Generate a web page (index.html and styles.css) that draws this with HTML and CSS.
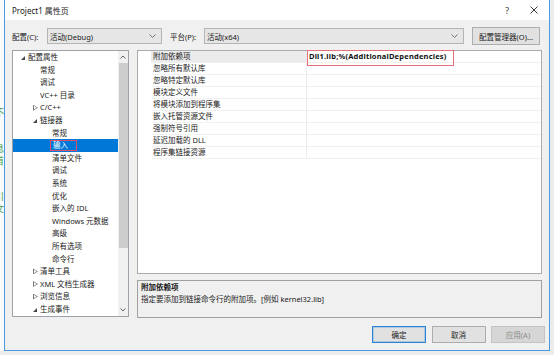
FILE: index.html
```html
<!DOCTYPE html>
<html lang="zh-CN">
<head>
    <meta charset="UTF-8">
    <title>Project1 属性页</title>
    <link rel="stylesheet" href="styles.css">
</head>
<body>

<div class="screen">
    <div class="behind">
        <div class="ghost">不</div>
        <div class="ghost"></div>
        <div class="ghost"></div>
        <div class="ghost">息</div>
        <div class="ghost">首</div>
        <div class="ghost"></div>
        <div class="ghost"></div>
        <div class="ghost">引</div>
        <div class="ghost">文</div>
    </div>

    <div class="dialog">
        <div class="titlebar">
            <span class="title">Project1 属性页</span>
            <span class="help">?</span>
            <svg class="close" width="8" height="8" viewBox="0 0 8 8">
                <path d="M0.5 0.5 L7.5 7.5 M7.5 0.5 L0.5 7.5" stroke="#222" stroke-width="0.9" fill="none"/>
            </svg>
        </div>

        <div class="config-row">
            <span class="label label-config">配置(C):</span>
            <div class="combo combo-config">
                <span>活动(Debug)</span>
                <svg class="chevron" width="7" height="4" viewBox="0 0 7 4"><polyline points="0.5,0.5 3.5,3.5 6.5,0.5" fill="none" stroke="#555" stroke-width="0.8"/></svg>
            </div>
            <span class="label label-platform">平台(P):</span>
            <div class="combo combo-platform">
                <span>活动(x64)</span>
                <svg class="chevron" width="7" height="4" viewBox="0 0 7 4"><polyline points="0.5,0.5 3.5,3.5 6.5,0.5" fill="none" stroke="#555" stroke-width="0.8"/></svg>
            </div>
            <button class="btn btn-manager">配置管理器(O)...</button>
        </div>

        <div class="main">
            <div class="tree">
                <ul class="tree-list">
                    <li class="node lv0"><span class="tog open"></span>配置属性</li>
                    <li class="node lv1"><span class="tog"></span>常规</li>
                    <li class="node lv1"><span class="tog"></span>调试</li>
                    <li class="node lv1"><span class="tog"></span>VC++ 目录</li>
                    <li class="node lv1"><span class="tog shut"></span>C/C++</li>
                    <li class="node lv1"><span class="tog open"></span>链接器</li>
                    <li class="node lv2"><span class="tog"></span>常规</li>
                    <li class="node lv2 selected"><span class="tog"></span><span class="mark">输入</span></li>
                    <li class="node lv2"><span class="tog"></span>清单文件</li>
                    <li class="node lv2"><span class="tog"></span>调试</li>
                    <li class="node lv2"><span class="tog"></span>系统</li>
                    <li class="node lv2"><span class="tog"></span>优化</li>
                    <li class="node lv2"><span class="tog"></span>嵌入的 IDL</li>
                    <li class="node lv2"><span class="tog"></span>Windows 元数据</li>
                    <li class="node lv2"><span class="tog"></span>高级</li>
                    <li class="node lv2"><span class="tog"></span>所有选项</li>
                    <li class="node lv2"><span class="tog"></span>命令行</li>
                    <li class="node lv1"><span class="tog shut"></span>清单工具</li>
                    <li class="node lv1"><span class="tog shut"></span>XML 文档生成器</li>
                    <li class="node lv1"><span class="tog shut"></span>浏览信息</li>
                    <li class="node lv1"><span class="tog open"></span>生成事件</li>
                </ul>
                <div class="scrollbar">
                    <svg class="arrow" width="6" height="4" viewBox="0 0 6 4"><polyline points="0.5,3.5 3,1 5.5,3.5" fill="none" stroke="#555" stroke-width="0.9"/></svg>
                    <div class="thumb"></div>
                    <div class="track"></div>
                    <svg class="arrow" width="6" height="4" viewBox="0 0 6 4"><polyline points="0.5,0.5 3,3 5.5,0.5" fill="none" stroke="#555" stroke-width="0.9"/></svg>
                </div>
            </div>

            <div class="right">
                <div class="grid">
                    <div class="prop active">
                        <span class="gutter"></span>
                        <span class="name">附加依赖项</span>
                        <span class="value"><b>Dll1.lib;%(AdditionalDependencies)</b><span class="redbox"></span></span>
                    </div>
                    <div class="prop"><span class="gutter"></span><span class="name">忽略所有默认库</span><span class="value"></span></div>
                    <div class="prop"><span class="gutter"></span><span class="name">忽略特定默认库</span><span class="value"></span></div>
                    <div class="prop"><span class="gutter"></span><span class="name">模块定义文件</span><span class="value"></span></div>
                    <div class="prop"><span class="gutter"></span><span class="name">将模块添加到程序集</span><span class="value"></span></div>
                    <div class="prop"><span class="gutter"></span><span class="name">嵌入托管资源文件</span><span class="value"></span></div>
                    <div class="prop"><span class="gutter"></span><span class="name">强制符号引用</span><span class="value"></span></div>
                    <div class="prop"><span class="gutter"></span><span class="name">延迟加载的 DLL</span><span class="value"></span></div>
                    <div class="prop"><span class="gutter"></span><span class="name">程序集链接资源</span><span class="value"></span></div>
                </div>
                <div class="desc">
                    <div class="desc-title">附加依赖项</div>
                    <div class="desc-text">指定要添加到链接命令行的附加项。[例如 kernel32.lib]</div>
                </div>
            </div>
        </div>

        <div class="footer">
            <button class="btn btn-ok">确定</button>
            <button class="btn">取消</button>
            <button class="btn btn-disabled">应用(A)</button>
        </div>
    </div>
</div>

</body>
</html>
```

FILE: styles.css
```css
* {
    margin: 0;
    padding: 0;
    box-sizing: border-box;
}
body {
    font-family: 'Noto Sans', 'Noto Sans CJK SC', sans-serif;
    font-size: 7.5px;
    color: #1a1a1a;
    background-color: #e6e6e6;
    width: 554px;
    height: 355px;
    overflow: hidden;
}
.screen {
    display: flex;
    height: 355px;
    background-color: #ececec;
}

/* window peeking out behind the dialog */
.behind {
    width: 4px;
    height: 351px;
    overflow: hidden;
    background-color: #fbfbfb;
    padding-top: 107px;
}
.ghost {
    height: 12px;
    line-height: 12px;
    font-size: 9px;
    color: #3a9a3a;
    margin-left: -5px;
    white-space: nowrap;
}

.dialog {
    width: 546px;
    height: 351px;
    background-color: #f0f0f0;
    border: 1px solid #4c9be2;
    border-top: none;
    display: flex;
    flex-direction: column;
}
.titlebar {
    height: 20px;
    background-color: #fff;
    display: flex;
    align-items: center;
    padding-left: 7px;
}
.title {
    font-size: 8px;
    flex: 1;
}
.help {
    font-size: 8.5px;
    color: #333;
    margin-right: 21px;
}
.close {
    margin-right: 11px;
}

.config-row {
    display: flex;
    align-items: center;
    height: 18px;
    margin-top: 7px;
    padding-left: 7px;
}
.label {
    white-space: nowrap;
}
.label-config {
    width: 35px;
}
.label-platform {
    width: 34px;
    margin-left: 8px;
}
.combo {
    height: 16px;
    background-color: #e6e6e6;
    border: 1px solid #b4b4b4;
    display: flex;
    align-items: center;
    justify-content: space-between;
    padding: 0 5px 0 2px;
}
.combo-config {
    width: 115px;
}
.combo-platform {
    width: 260px;
}
.btn {
    font-family: inherit;
    font-size: 7.5px;
    color: #1a1a1a;
    background-color: #e1e1e1;
    border: 1px solid #adadad;
    height: 17px;
    width: 54px;
}
.btn-manager {
    width: 68px;
    height: 18px;
    margin-left: 8px;
}

.main {
    display: flex;
    gap: 8px;
    margin-top: 5px;
    padding-left: 7px;
    height: 268px;
}
.tree {
    width: 117px;
    height: 267px;
    background-color: #fff;
    border: 1px solid #9ea2a8;
    display: flex;
}
.tree-list {
    list-style: none;
    flex: 1;
}
.node {
    height: 12.6px;
    line-height: 12.6px;
    display: flex;
    align-items: center;
    white-space: nowrap;
}
.lv0 {
    padding-left: 8px;
}
.lv1 {
    padding-left: 20px;
}
.lv2 {
    padding-left: 32px;
}
.tog {
    width: 7px;
    height: 6px;
    flex-shrink: 0;
}
.tog.open {
    border-style: solid;
    border-width: 0 0 4px 4px;
    border-color: transparent transparent #444 transparent;
    width: 0;
    height: 0;
    margin: 1px 3px 0 0;
}
.tog.shut {
    width: 7px;
    position: relative;
    clip-path: polygon(0 0, 5px 3px, 0 6px);
    background-color: #7a7a7a;
}
.tog.shut::after {
    content: '';
    position: absolute;
    left: 1px;
    top: 1.2px;
    width: 6px;
    height: 3.6px;
    background-color: #fff;
    clip-path: polygon(0 0, 2.6px 1.8px, 0 3.6px);
}
.node.selected {
    background-color: #0078d7;
    color: #fff;
}
.mark {
    border: 1px solid #e0506a;
    padding: 0 8px 0 2px;
    margin-left: -2px;
    line-height: 9px;
}
.scrollbar {
    width: 10px;
    background-color: #f0f0f0;
    display: flex;
    flex-direction: column;
    align-items: center;
}
.arrow {
    margin: 4px 0;
}
.thumb {
    width: 9px;
    height: 185px;
    background-color: #cdcdcd;
}
.track {
    flex: 1;
}

.right {
    width: 405px;
    display: flex;
    flex-direction: column;
    gap: 6px;
}
.grid {
    height: 224px;
    background-color: #fff;
    border: 1px solid #a9abb0;
}
.prop {
    display: flex;
    height: 12px;
    line-height: 11px;
}
.gutter {
    width: 13px;
}
.name {
    width: 156px;
    padding-left: 2px;
    border-bottom: 1px solid #f0f0f0;
    border-right: 1px solid #ececec;
    white-space: nowrap;
}
.value {
    flex: 1;
    padding-left: 2px;
    border-bottom: 1px solid #f0f0f0;
    position: relative;
    white-space: nowrap;
}
.value b {
    color: #111;
    letter-spacing: 0.2px;
}
.prop.active .name {
    background-color: #ebebeb;
}
.redbox {
    position: absolute;
    left: 0;
    top: -1px;
    width: 147px;
    height: 16px;
    border: 1px solid #e8707c;
}
.desc {
    height: 38px;
    border: 1px solid #a0a0a0;
    padding-left: 3px;
    background-color: #f0f0f0;
}
.desc-title {
    font-weight: bold;
    line-height: 12px;
}
.desc-text {
    line-height: 12px;
}

.footer {
    display: flex;
    justify-content: flex-end;
    gap: 5.5px;
    margin-top: 8px;
    padding-right: 4px;
}
.btn-ok {
    border-color: #2b83d6;
    box-shadow: inset 0 0 0 1px rgba(60, 140, 220, 0.3);
}
.btn-disabled {
    background-color: #d6d6d6;
    border-color: #c4c4c4;
    color: #8a8a8a;
}
```
